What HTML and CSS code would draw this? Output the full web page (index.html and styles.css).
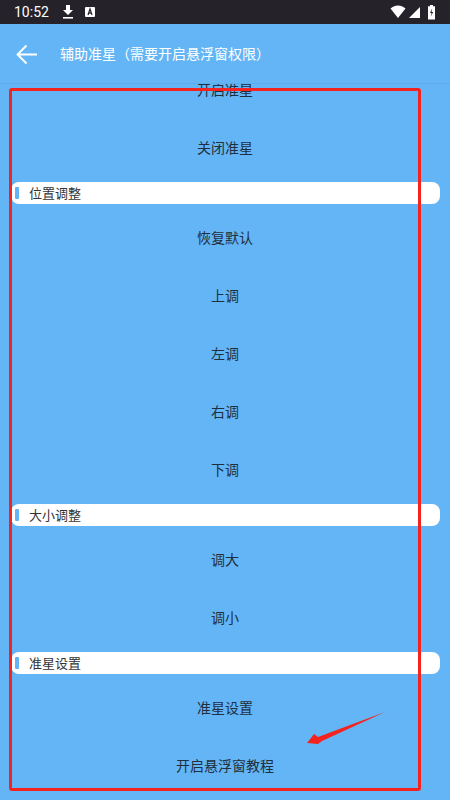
FILE: index.html
```html
<!doctype html>
<html lang="zh">
<head>
  <meta charset="UTF-8">
  <meta name="viewport" content="width=device-width, initial-scale=1.0">
  <title>辅助准星</title>
  <link rel="stylesheet" href="styles.css">
</head>
<body>
  <div class="phone">
    <div class="status-bar">
      <span class="clock">10:52</span>
      <svg class="status-icon" width="16" height="16" viewBox="0 0 16 16">
        <path d="M6 1h4v5h3l-5 5-5-5h3z" fill="#fff"/>
        <rect x="3" y="13" width="10" height="1.6" fill="#fff"/>
      </svg>
      <svg class="status-icon" width="14" height="14" viewBox="0 0 14 14">
        <rect x="2" y="2" width="10" height="10" rx="1" fill="#fff"/>
        <path d="M5 10l2-6 2 6M5.800 8.200h2.400" fill="none" stroke="#26222a" stroke-width="1.200"/>
      </svg>
      <span class="status-right">
        <svg width="18" height="14" viewBox="0 0 18 14">
          <path d="M1.500 3.500C6 -.5 12 -.5 16.500 3.500L9 13z" fill="#fff"/>
        </svg>
        <svg width="13" height="13" viewBox="0 0 13 13">
          <path d="M12 1v11H1z" fill="#fff"/>
        </svg>
        <svg class="battery" width="9" height="15" viewBox="0 0 9 15">
          <path d="M3 0h3v1.200h2v13.300H1V1.200h2z" fill="#fff"/>
          <path d="M5.200 3.500L3 8h1.600l-.8 3.500L6.200 7H4.600z" fill="#26222a"/>
        </svg>
      </span>
    </div>

    <header class="app-bar">
      <svg class="back" width="24" height="24" viewBox="0 0 24 24">
        <path d="M22 12.500H2.500M11.500 3.500l-9 9 9 9" fill="none" stroke="#fff" stroke-width="1.900"/>
      </svg>
      <h1 class="app-title">辅助准星（需要开启悬浮窗权限）</h1>
    </header>

    <main class="content">
      <div class="list">
        <div class="row">开启准星</div>
        <div class="row">关闭准星</div>
        <div class="section"><span class="section-mark"></span>位置调整</div>
        <div class="row">恢复默认</div>
        <div class="row">上调</div>
        <div class="row">左调</div>
        <div class="row">右调</div>
        <div class="row">下调</div>
        <div class="section"><span class="section-mark"></span>大小调整</div>
        <div class="row">调大</div>
        <div class="row">调小</div>
        <div class="section"><span class="section-mark"></span>准星设置</div>
        <div class="row">准星设置</div>
        <div class="row">开启悬浮窗教程</div>
      </div>
    </main>

    <!-- red annotation drawn over the screenshot -->
    <div class="note-frame"></div>
    <svg class="note-arrow" width="84" height="40" viewBox="0 0 84 40">
      <path d="M80 1L17 30 13 33 2 32 9 23 13 26z" fill="#f4231f"/>
    </svg>
  </div>
</body>
</html>
```

FILE: styles.css
```css
body {
  margin: 0;
  background: #64b5f6;
  font-family: "Noto Sans CJK SC", "Liberation Sans", sans-serif;
}

.phone {
  position: relative;
  width: 450px;
  height: 800px;
  display: flex;
  flex-direction: column;
  overflow: hidden;
  background: #64b5f6;
}

.status-bar {
  height: 24px;
  flex: none;
  display: flex;
  align-items: center;
  padding: 0 14px;
  box-sizing: border-box;
  background: #26222a;
  color: #fff;
}

.clock {
  font-family: Roboto, "Liberation Sans", sans-serif;
  font-size: 14px;
  margin-right: 11px;
}

.status-icon {
  margin-right: 7px;
}

.status-right {
  margin-left: auto;
  display: flex;
  align-items: center;
  gap: 1px;
}

.battery {
  margin-left: 5px;
}

.app-bar {
  height: 60px;
  flex: none;
  display: flex;
  align-items: center;
  padding-left: 15px;
  box-sizing: border-box;
  border-bottom: 1px solid #5eacec;
}

.back {
  margin-right: 21px;
}

.app-title {
  margin: 0 0 2px;
  font-size: 14px;
  font-weight: normal;
  color: #fff;
}

.content {
  flex: 1;
  overflow: hidden;
}

.list {
  margin-top: -24px;
}

.row {
  height: 58px;
  display: flex;
  align-items: center;
  justify-content: center;
  font-size: 14px;
  color: #1f2f3d;
}

.section {
  height: 22px;
  margin: 6px 10px 4px 11px;
  padding-bottom: 2px;
  box-sizing: border-box;
  display: flex;
  align-items: center;
  background: #fff;
  border-radius: 8px;
  font-size: 13px;
  color: #333;
}

.section-mark {
  width: 4px;
  height: 12px;
  margin: 2px 10px 0 4px;
  border-radius: 1px;
  background: #64b5f6;
}

.note-frame {
  position: absolute;
  left: 9px;
  top: 88px;
  width: 412px;
  height: 703px;
  box-sizing: border-box;
  border: 3px solid #f4231f;
  border-radius: 3px;
}

.note-arrow {
  position: absolute;
  left: 305px;
  top: 711px;
}
```
